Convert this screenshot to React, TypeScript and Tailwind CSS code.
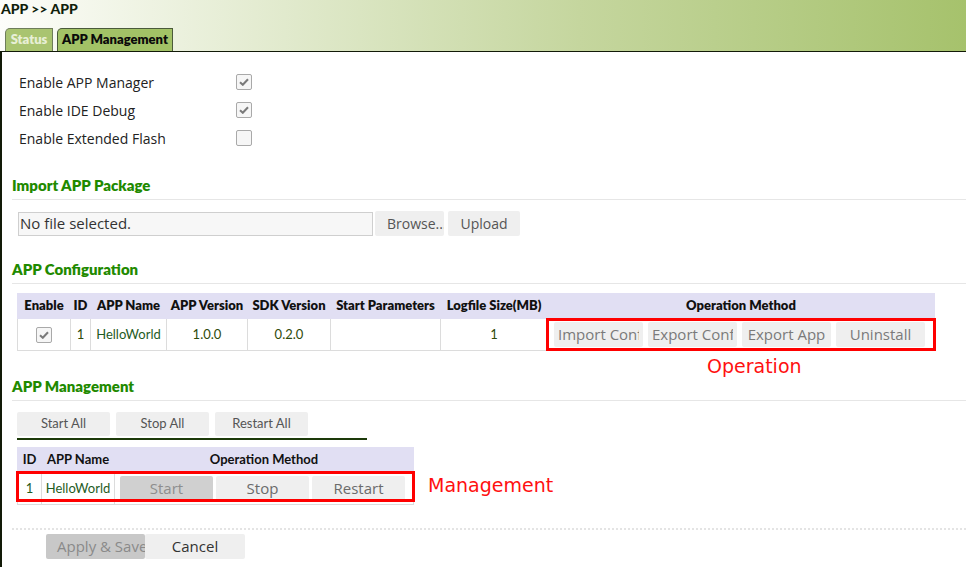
import React from "react";

const ui = { fontFamily: '"Open Sans", "Noto Sans", sans-serif' };
const head = { fontFamily: 'Lato, "Open Sans", sans-serif' };

function Check({ on }: { on: boolean }) {
  return (
    <span className="flex h-4 w-4 items-center justify-center rounded-[2px] border border-[#a9a9a9] bg-[#f6f6f6]">
      {on && (
        <svg width="10" height="8" viewBox="0 0 10 8">
          <path d="M1 4.2 L3.8 6.8 L9 1.3" stroke="#7a7a7a" strokeWidth="2" fill="none" />
        </svg>
      )}
    </span>
  );
}

function Heading({ title }: { title: string }) {
  return (
    <div className="border-b border-[#e6e6e6] pb-1 text-[15px] font-extrabold leading-5 text-[#1f8a00]" style={head}>
      {title}
    </div>
  );
}

function GreyBtn({ label, w, dim }: { label: string; w: string; dim?: boolean }) {
  return (
    <button
      className={`h-[25px] ${w} shrink-0 rounded-[2px] text-[15px] ${dim ? "bg-[#d0d0d0] text-[#8e8e8e]" : "bg-[#efefef] text-[#6b6b6b]"}`}
      style={ui}
    >
      {label}
    </button>
  );
}

function OpBtn({ label }: { label: string }) {
  return (
    <div
      className="flex h-[25px] w-[89px] shrink-0 items-center justify-center overflow-hidden whitespace-nowrap rounded-[2px] bg-[#efefef] px-[4px] text-[15px] text-[#7a7a7a]"
      style={ui}
    >
      <span className="overflow-hidden">{label}</span>
    </div>
  );
}

const configCols = [
  { h: "Enable", w: "w-[53px]" },
  { h: "ID", w: "w-[20px]" },
  { h: "APP Name", w: "w-[76px]" },
  { h: "APP Version", w: "w-[81px]" },
  { h: "SDK Version", w: "w-[83px]" },
  { h: "Start Parameters", w: "w-[110px]" },
  { h: "Logfile Size(MB)", w: "w-[107px]" },
  { h: "Operation Method", w: "w-[387px]" },
];

export default function App() {
  return (
    <div className="h-[567px] w-[966px] overflow-hidden bg-white text-[#222]">
      {/* title bar */}
      <div className="flex h-[51px] flex-col justify-between bg-linear-to-r from-[#fdfdfa] via-[#c5d69e] via-60% to-[#a6c26c]">
        <div className="pl-[1px] pt-[1px] text-[14px] font-black leading-4 text-[#10200a]" style={head}>
          APP &gt;&gt; APP
        </div>
        <div className="flex gap-[4px] pl-[5px]">
          <div
            className="flex h-[23px] w-[48px] items-center justify-center rounded-tl-[5px] border border-b-0 border-[#6e7d5a] bg-[#a9c470] text-[13px] font-extrabold text-[#e8efd6]"
            style={head}
          >
            Status
          </div>
          <div
            className="flex h-[23px] w-[116px] items-center justify-center rounded-tl-[5px] border border-b-0 border-[#4a5a3a] bg-[#a2c266] text-[13px] font-extrabold text-[#0a0a0a]"
            style={head}
          >
            APP Management
          </div>
        </div>
      </div>

      {/* panel */}
      <div className="h-[516px] border-l-2 border-t border-[#121a08] pl-[10px]">
        <div className="pt-[16px] pl-[7px]">
          {["Enable APP Manager", "Enable IDE Debug", "Enable Extended Flash"].map((l, i) => (
            <div key={l} className="flex h-[28px] items-center">
              <span className="w-[217px] text-[14px] text-[#222]" style={ui}>
                {l}
              </span>
              <Check on={i < 2} />
            </div>
          ))}
        </div>

        <div className="mt-[23px]">
          <Heading title="Import APP Package" />
        </div>
        <div className="mt-[11px] flex items-center pl-[6px]">
          <div
            className="flex h-[24px] w-[355px] items-center border border-[#cfcfcf] bg-[#f7f7f7] pl-[1px] text-[15px] text-[#333]"
            style={ui}
          >
            No file selected.
          </div>
          <button className="ml-[2px] h-[25px] w-[69px] overflow-hidden whitespace-nowrap rounded-[2px] bg-[#efefef] pl-[12px] text-left text-[14px] text-[#555]" style={ui}>
            Browse...
          </button>
          <button className="ml-[4px] h-[25px] w-[72px] rounded-[2px] bg-[#efefef] text-[14px] text-[#555]" style={ui}>
            Upload
          </button>
        </div>

        <div className="mt-[23px]">
          <Heading title="APP Configuration" />
        </div>

        <div className="relative mt-[9px] ml-[5px] w-[918px]">
          <table className="table-fixed border-collapse text-center" style={head}>
            <thead>
              <tr className="h-[25px] bg-[#e1dff3]">
                {configCols.map((c) => (
                  <th key={c.h} className={`${c.w} border border-[#e1dff3] px-0 text-[13px] font-extrabold text-[#111]`}>
                    {c.h}
                  </th>
                ))}
              </tr>
            </thead>
            <tbody>
              <tr className="h-[32px] text-[13px] text-[#2f4a0a]">
                <td className="border border-[#dcdcdc]">
                  <div className="flex justify-center">
                    <Check on />
                  </div>
                </td>
                <td className="border border-[#dcdcdc]">1</td>
                <td className="border border-[#dcdcdc] text-[#1f5c1f]">HelloWorld</td>
                <td className="border border-[#dcdcdc]">1.0.0</td>
                <td className="border border-[#dcdcdc]">0.2.0</td>
                <td className="border border-[#dcdcdc]"></td>
                <td className="border border-[#dcdcdc]">1</td>
                <td className="border border-[#dcdcdc] px-[6px]">
                  <div className="flex gap-[5px]">
                    <OpBtn label="Import Config" />
                    <OpBtn label="Export Config" />
                    <OpBtn label="Export App" />
                    <OpBtn label="Uninstall" />
                  </div>
                </td>
              </tr>
            </tbody>
          </table>
          {/* annotation */}
          <div className="absolute left-[529px] top-[25px] h-[33px] w-[390px] border-[3px] border-[#ff0000]" />
          <div
            className="absolute left-[690px] top-[62px] text-[19px] leading-[22px] text-[#ff1010]"
            style={{ fontFamily: '"DejaVu Sans", sans-serif' }}
          >
            Operation
          </div>
        </div>

        <div className="mt-[25px]">
          <Heading title="APP Management" />
        </div>

        <div className="mt-[11px] ml-[5px] flex w-[350px] gap-[6px] border-b-2 border-[#1d3a0a] pb-[2px]">
          <button className="h-[24px] w-[93px] rounded-[2px] bg-[#efefef] text-[13px] text-[#555]" style={head}>
            Start All
          </button>
          <button className="h-[24px] w-[93px] rounded-[2px] bg-[#efefef] text-[13px] text-[#555]" style={head}>
            Stop All
          </button>
          <button className="h-[24px] w-[93px] rounded-[2px] bg-[#efefef] text-[13px] text-[#555]" style={head}>
            Restart All
          </button>
        </div>

        <div className="relative mt-[7px] ml-[5px] flex items-center">
          <table className="table-fixed border-collapse text-center" style={head}>
            <thead>
              <tr className="h-[25px] bg-[#e1dff3] text-[13px] font-extrabold text-[#111]">
                <th className="w-[24px] border border-[#e1dff3]">ID</th>
                <th className="w-[73px] border border-[#e1dff3]">APP Name</th>
                <th className="w-[299px] border border-[#e1dff3]">Operation Method</th>
              </tr>
            </thead>
            <tbody>
              <tr className="h-[32px] text-[13px] text-[#1f5c1f]">
                <td className="border border-[#dcdcdc]">1</td>
                <td className="border border-[#dcdcdc]">HelloWorld</td>
                <td className="border border-[#dcdcdc] px-[5px]">
                  <div className="flex gap-[3px]">
                    <GreyBtn label="Start" w="w-[93px]" dim />
                    <GreyBtn label="Stop" w="w-[93px]" />
                    <GreyBtn label="Restart" w="w-[93px]" />
                  </div>
                </td>
              </tr>
            </tbody>
          </table>
          <div className="absolute left-[-1px] top-[24px] h-[31px] w-[399px] border-[3px] border-[#ff0000]" />
          <div
            className="absolute left-[411px] top-[27px] text-[19px] leading-[22px] text-[#ff1010]"
            style={{ fontFamily: '"DejaVu Sans", sans-serif' }}
          >
            Management
          </div>
        </div>

        <div className="mt-[23px] border-t-2 border-dotted border-[#e4e4e4]" />
        <div className="mt-[4px] ml-[34px] flex">
          <button className="h-[25px] w-[99px] overflow-hidden whitespace-nowrap rounded-[2px] bg-[#c8c8c8] pl-[11px] text-left text-[15px] text-[#8a8a8a]" style={ui}>
            Apply &amp; Save
          </button>
          <button className="h-[25px] w-[100px] rounded-[2px] bg-[#efefef] text-[15px] text-[#333]" style={ui}>
            Cancel
          </button>
        </div>
      </div>
    </div>
  );
}
